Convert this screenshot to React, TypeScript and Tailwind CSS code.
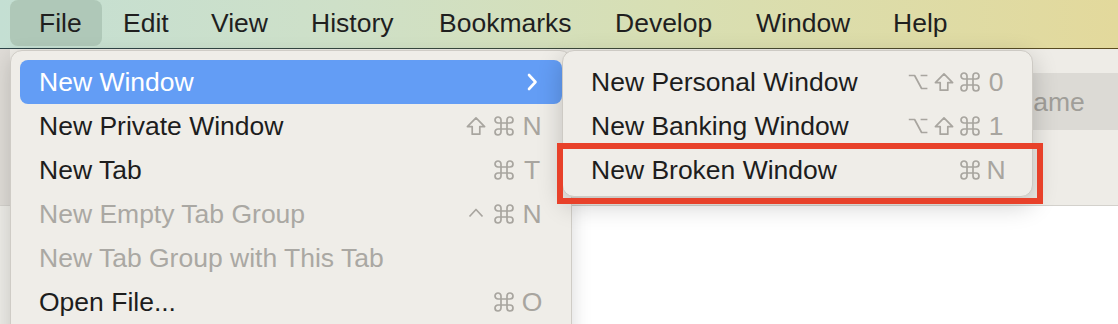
import React from "react";

const barItems = [
  { label: "File", w: "w-[92px] pl-[29px]", active: true },
  { label: "Edit", w: "w-[88px] ml-[21px]" },
  { label: "View", w: "w-[100px]" },
  { label: "History", w: "w-[128px]" },
  { label: "Bookmarks", w: "w-[176px]" },
  { label: "Develop", w: "w-[141px]" },
  { label: "Window", w: "w-[137px]" },
  { label: "Help", w: "w-[80px]" },
];

type Item = {
  label: string;
  keys?: string[];
  disabled?: boolean;
  active?: boolean;
  submenu?: boolean;
};

const fileItems: Item[] = [
  { label: "New Window", active: true, submenu: true },
  { label: "New Private Window", keys: ["shift", "cmd", "N"] },
  { label: "New Tab", keys: ["cmd", "T"] },
  { label: "New Empty Tab Group", keys: ["ctrl", "cmd", "N"], disabled: true },
  { label: "New Tab Group with This Tab", disabled: true },
  { label: "Open File...", keys: ["cmd", "O"] },
];

const windowItems: Item[] = [
  { label: "New Personal Window", keys: ["opt", "shift", "cmd", "0"] },
  { label: "New Banking Window", keys: ["opt", "shift", "cmd", "1"] },
  { label: "New Broken Window", keys: ["cmd", "N"] },
];

// modifier key symbols drawn as small icons
const modPaths: Record<string, string> = {
  shift: "M10 1.8 L18.6 10.6 H13.8 V18.2 H6.2 V10.6 H1.4 Z",
  cmd: "M7 7 V4 A3 3 0 1 0 4 7 H16 A3 3 0 1 0 13 4 V16 A3 3 0 1 0 16 13 H4 A3 3 0 1 0 7 16 Z",
  opt: "M0.8 3.5 H6.6 L13.6 16.5 H19.4 M12.6 3.5 H19.4",
  ctrl: "M3.5 12.5 L10 5.5 L16.5 12.5",
};

const ModIcon = ({ name }: { name: string }) => (
  <svg width="20" height="20" viewBox="0 0 20 20">
    <path
      d={modPaths[name]}
      fill="none"
      stroke="#a8a59f"
      strokeWidth="1.7"
      strokeLinejoin="round"
    />
  </svg>
);

const Keys = ({ keys, cell }: { keys: string[]; cell: string }) => (
  <div className="flex items-center text-[#a8a59f]">
    {keys.map((k, i) => (
      <span key={"key-" + i} className={`${cell} flex justify-center`}>
        {modPaths[k] ? <ModIcon name={k} /> : <span className="text-[26.5px] pt-[2px]">{k}</span>}
      </span>
    ))}
  </div>
);

const Chevron = () => (
  <span className="w-[28px] flex justify-center">
    <svg width="12" height="18" viewBox="0 0 12 18">
      <polyline
        points="3,2 9.5,9 3,16"
        fill="none"
        stroke="white"
        strokeWidth="2.6"
        strokeLinecap="round"
        strokeLinejoin="round"
      />
    </svg>
  </span>
);

const Row = ({ item, cell, pr }: { item: Item; cell: string; pr: string }) => (
  <div
    className={`h-[44px] flex items-center justify-between pl-[19px] ${pr} rounded-[8px] ${
      item.active ? "bg-[#639df5] text-white" : item.disabled ? "text-[#aaa8a3]" : "text-[#1d1d1d]"
    }`}
  >
    <span className="text-[26.5px] pt-[2px]">{item.label}</span>
    {item.submenu && <Chevron />}
    {item.keys && <Keys keys={item.keys} cell={cell} />}
  </div>
);

export default function App() {
  return (
    <div className="relative w-[1118px] h-[324px] overflow-hidden bg-white font-['Liberation_Sans',Arial,sans-serif]">
      {/* menu bar */}
      <div className="h-[48px] flex items-start bg-[linear-gradient(90deg,#c4dfd3_0%,#cee0c8_30%,#d8dfb3_60%,#e3d99c_100%)] pl-[10px]">
        {barItems.map((b, i) => (
          <div
            key={"bar-" + i}
            className={`${b.w} h-[46px] flex items-center pt-[2px] text-[26.5px] text-[#1f1f1f] ${
              b.active ? "bg-[#afc8b8] rounded-[8px]" : ""
            }`}
          >
            {b.label}
          </div>
        ))}
      </div>
      <div className="h-[1px] bg-[linear-gradient(90deg,#2c4449_0%,#3b4a3c_50%,#5c4c1f_100%)]"></div>

      {/* safari toolbar */}
      <div className="h-[157px] flex border-b border-[#d3d1cc]">
        <div className="w-[10px] bg-[#dedbd6]"></div>
        <div className="flex-1 bg-[#eeece7] flex justify-end pt-[24px]">
          <div className="w-[118px] h-[57px] bg-[#dcdad5] flex items-center pl-[14px] pt-[2px] text-[26.5px] text-[#a09e99]">
            Name
          </div>
        </div>
      </div>
      <div className="flex h-[120px]">
        <div className="w-[10px] bg-[#ecebe6]"></div>
        <div className="flex-1 bg-white"></div>
      </div>

      {/* file menu */}
      <div className="absolute left-[10px] top-[50px] w-[562px] h-[300px] rounded-t-[12px] bg-[#efede8] border border-[#cfccc6] shadow-[0_6px_20px_rgba(0,0,0,0.16)] pt-[9px] px-[9px]">
        {fileItems.map((item, i) => (
          <Row key={"file-" + i} item={item} cell="w-[28px]" pr="pr-[16px]" />
        ))}
      </div>

      {/* new window submenu */}
      <div className="absolute left-[562px] top-[50px] w-[471px] h-[147px] rounded-[12px] bg-[#efede8] border border-[#cdcac4] shadow-[0_8px_26px_rgba(0,0,0,0.2)] pt-[9px] px-[9px]">
        {windowItems.map((item, i) => (
          <Row key={"win-" + i} item={item} cell="w-[26px]" pr="pr-[14px]" />
        ))}
      </div>

      {/* highlight box */}
      <div className="absolute left-[557px] top-[143px] w-[486px] h-[61px] border-[6px] border-[#e8412a]"></div>
    </div>
  );
}
